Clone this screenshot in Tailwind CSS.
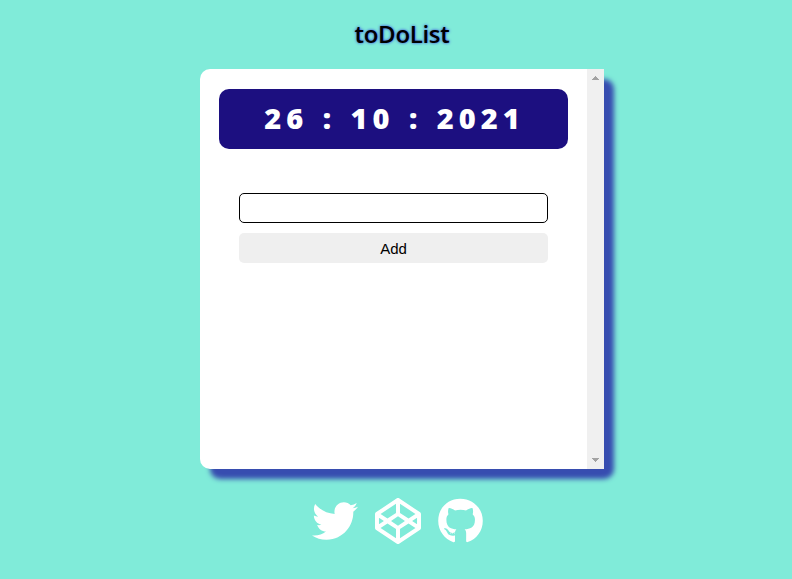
<!DOCTYPE html>
<html lang="en">
<head>
<meta charset="utf-8">
<title>toDoList</title>
<script src="https://cdn.jsdelivr.net/npm/@tailwindcss/browser@4"></script>
</head>
<body class="h-[579px] overflow-hidden bg-[#80ebd9] font-['Segoe_UI','Open_Sans',sans-serif]">
<div class="flex flex-col items-center pl-[12px]">
  <h1 class="mt-[17px] h-[52px] text-[24px] leading-[34px] font-semibold tracking-[-0.3px] text-black [text-shadow:0_0_3px_#2a2ae0]">toDoList</h1>
  <main class="flex h-[400px] w-[404px] rounded-[10px] bg-white shadow-[10px_10px_5px_#374db0]">
    <div class="flex-1 px-[19px] pt-5">
      <div class="h-[60px] rounded-[10px] bg-[#1c0f80] pl-[2px] text-center text-[29px] leading-[57px] font-extrabold tracking-[5px] [word-spacing:1.9px] whitespace-pre text-white">26 : 10 : 2021</div>
      <form class="mt-[44px] flex flex-col gap-[10px] px-5">
        <input type="text" class="h-[30px] rounded-[5px] border border-black bg-white px-2 outline-none">
        <button type="button" class="h-[30px] rounded-[5px] bg-[#efefef] pt-px font-['Liberation_Sans',Arial,sans-serif] text-[15px] leading-[30px] text-black">Add</button>
      </form>
    </div>
    <div class="flex w-[17px] flex-col items-center justify-between bg-[#f0f0f0] py-[7px]">
      <svg class="h-1 w-[7px]" viewBox="0 0 7 4" fill="#a3a3a3" shape-rendering="crispEdges"><path d="M3 0h1v1h1v1h1v1h1v1H0V3h1V2h1V1h1z"/></svg>
      <svg class="h-1 w-[7px]" viewBox="0 0 7 4" fill="#a3a3a3" shape-rendering="crispEdges"><path d="M0 0h7v1H6v1H5v1H4v1H3V3H2V2H1V1H0z"/></svg>
    </div>
  </main>
  <footer class="mt-[29px] flex gap-[17px] self-start pl-[300px] text-white">
    <svg class="size-[46px]" viewBox="0 0 512 512" fill="currentColor"><path d="M459.37 151.716c.325 4.548.325 9.097.325 13.645 0 138.72-105.583 298.558-298.558 298.558-59.452 0-114.68-17.219-161.137-47.106 8.447.974 16.568 1.299 25.34 1.299 49.055 0 94.213-16.568 130.274-44.832-46.132-.975-84.792-31.188-98.112-72.772 6.498.974 12.995 1.624 19.818 1.624 9.421 0 18.843-1.3 27.614-3.573-48.081-9.747-84.143-51.98-84.143-102.985v-1.299c13.969 7.797 30.214 12.67 47.431 13.319-28.264-18.843-46.781-51.005-46.781-87.391 0-19.492 5.197-37.36 14.294-52.954 51.655 63.675 129.3 105.258 216.365 109.807-1.624-7.797-2.599-15.918-2.599-24.04 0-57.828 46.782-104.934 104.934-104.934 30.213 0 57.502 12.67 76.67 33.137 23.715-4.548 46.456-13.32 66.599-25.34-7.798 24.366-24.366 44.833-46.132 57.827 21.117-2.273 41.584-8.122 60.426-16.243-14.292 20.791-32.161 39.308-52.628 54.253z"/></svg>
    <svg class="size-[46px]" viewBox="0 0 512 512" fill="currentColor"><path d="M502.285 159.704l-234-156c-7.987-4.915-16.511-4.96-24.571 0l-234 156C3.714 163.703 0 170.847 0 177.989v155.999c0 7.143 3.714 14.286 9.715 18.286l234 156.022c7.987 4.915 16.511 4.96 24.571 0l234-156.022c6-3.999 9.715-11.143 9.715-18.286V177.989c-.001-7.142-3.715-14.286-9.716-18.285zM278 63.131l172.286 114.858-76.857 51.429L278 165.703V63.131zm-44 0v102.572l-95.429 63.715-76.857-51.429L234 63.131zM44 219.132l55.143 36.857L44 292.847v-73.715zm190 229.715L61.714 333.989l76.857-51.429L234 346.275v102.572zm22-140.858l-77.715-52 77.715-52 77.715 52-77.715 52zm22 140.858V346.275l95.429-63.715 76.857 51.429L278 448.847zm190-156l-55.143-36.858L468 219.132v73.715z"/></svg>
    <svg class="h-[46px] w-[45px]" viewBox="0 0 496 512" fill="currentColor"><path d="M165.9 397.4c0 2-2.3 3.6-5.2 3.6-3.3.3-5.6-1.3-5.6-3.6 0-2 2.3-3.6 5.2-3.6 3-.3 5.6 1.3 5.6 3.6zm-31.1-4.5c-.7 2 1.3 4.3 4.3 4.9 2.6 1 5.6 0 6.2-2s-1.3-4.3-4.3-5.2c-2.6-.7-5.5.3-6.2 2.3zm44.2-1.7c-2.9.7-4.9 2.6-4.6 4.9.3 2 2.9 3.3 5.9 2.6 2.9-.7 4.9-2.6 4.6-4.6-.3-1.9-3-3.2-5.9-2.9zM244.8 8C106.1 8 0 113.3 0 252c0 110.9 69.8 205.8 169.5 239.2 12.8 2.3 17.3-5.6 17.3-12.1 0-6.2-.3-40.4-.3-61.4 0 0-70 15-84.7-29.8 0 0-11.4-29.1-27.8-36.6 0 0-22.9-15.7 1.6-15.4 0 0 24.9 2 38.6 25.8 21.9 38.6 58.6 27.5 72.9 20.9 2.3-16 8.8-27.1 16-33.7-55.9-6.2-112.3-14.3-112.3-110.5 0-27.5 7.6-41.3 23.6-58.9-2.6-6.5-11.1-33.3 2.6-67.9 20.9-6.5 69 27 69 27 20-5.6 41.5-8.5 62.8-8.5s42.8 2.9 62.8 8.5c0 0 48.1-33.6 69-27 13.7 34.7 5.2 61.4 2.6 67.9 16 17.7 25.8 31.5 25.8 58.9 0 96.5-58.9 104.2-114.8 110.5 9.2 7.9 17 22.9 17 46.4 0 33.7-.3 75.4-.3 83.6 0 6.5 4.6 14.4 17.3 12.1C428.2 457.8 496 362.9 496 252 496 113.3 383.5 8 244.8 8z"/></svg>
  </footer>
</div>
</body>
</html>
